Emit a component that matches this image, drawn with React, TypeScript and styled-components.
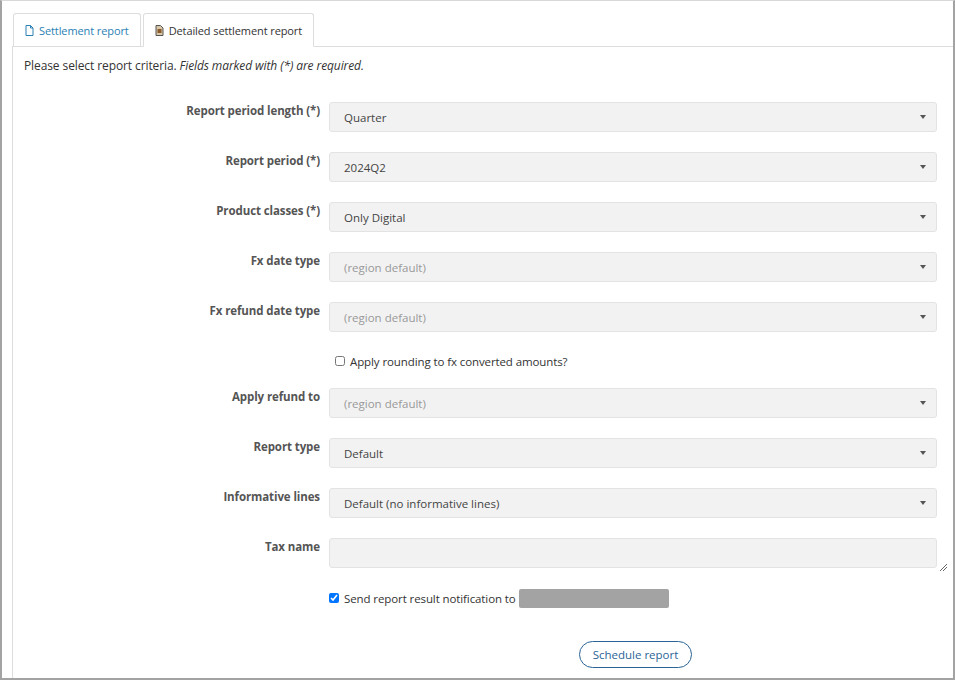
import React from "react";
import styled, { createGlobalStyle } from "styled-components";

const Global = createGlobalStyle`
  html, body { margin: 0; padding: 0; background: #fff; }
  body { font-family: "Open Sans", "Liberation Sans", sans-serif; font-size: 12px; color: #333; }
`;

const Frame = styled.div`
  box-sizing: border-box;
  width: 955px; height: 680px;
  border: 2px solid #a3a3a3;
  border-top: 1px solid #d8d8d8;
  padding: 12px 0 0 10px;
  background: #fff;
  overflow: hidden;
`;

const Tabs = styled.div`
  display: flex; height: 33px; align-items: stretch;
  border-bottom: 1px solid #ddd;
  padding-left: 1px;
`;

const Tab = styled.div<{ $active?: boolean }>`
  display: flex; align-items: center; gap: 5px;
  padding: 0 11px;
  margin-right: 2px;
  border: 1px solid #ddd;
  border-bottom: ${p => (p.$active ? "1px solid #fff" : "none")};
  margin-bottom: ${p => (p.$active ? "-1px" : "0")};
  border-radius: 3px 3px 0 0;
  background: #fff;
  color: ${p => (p.$active ? "#333" : "#2a7fb4")};
  font-size: 11px;
  letter-spacing: -0.1px;
`;

const Panel = styled.div`
  border-left: 1px solid #ddd;
  height: 640px;
  padding: 10px 16px 0 11px;
  box-sizing: border-box;
`;

const Intro = styled.p`
  margin: 0 0 28px; font-size: 12px; color: #333; letter-spacing: -0.1px;
  em { font-style: italic; }
`;

const Grid = styled.div`
  display: grid;
  grid-template-columns: 296px 1fr;
  column-gap: 9px;
  align-items: start;
`;

const Label = styled.div`
  text-align: right; font-weight: 700; color: #555; font-size: 11.5px;
  padding-top: 1px;
  line-height: 16px;
  letter-spacing: -0.1px;
`;

const Select = styled.div<{ $placeholder?: boolean }>`
  height: 30px; box-sizing: border-box;
  background: #f2f2f2; border: 1px solid #e3e3e3; border-radius: 3px;
  display: flex; align-items: center; justify-content: space-between;
  padding: 0 10px 0 14px;
  color: ${p => (p.$placeholder ? "#999" : "#444")};
  font-size: 11.5px;
  margin-bottom: 20px;
  &::after {
    content: ""; border-left: 3px solid transparent; border-right: 3px solid transparent;
    border-top: 4px solid #555;
  }
`;

const TextArea = styled.div`
  height: 30px; box-sizing: border-box; position: relative;
  background: #f2f2f2; border: 1px solid #e3e3e3; border-radius: 3px;
  margin-bottom: 21px;
`;

const Grip = styled.svg`
  position: absolute; right: -12px; bottom: -5px;
`;

const CheckRow = styled.label<{ $mb: number; $ml: number }>`
  grid-column: 2; margin-left: ${p => p.$ml}px;
  display: flex; align-items: center; gap: 3px; font-size: 11.5px; color: #333;
  height: 18px;
  margin-bottom: ${p => p.$mb}px;
  letter-spacing: -0.1px;
  input { margin: 0 2px 0 6px; width: 10px; height: 10px; }
`;

const Masked = styled.span`
  display: inline-block; width: 150px; height: 19px; background: #a3a3a3; border-radius: 2px;
`;

const Actions = styled.div`
  display: flex; justify-content: center; padding-left: 300px;
`;

const Button = styled.button`
  font-family: inherit; font-size: 11.5px; color: #2a6496;
  background: #fff; border: 1px solid #2a6496; border-radius: 14px;
  height: 27px; padding: 0 13px; margin-left: 10px;
`;

const DocIcon = ({ color }: { color: string }) => (
  <svg width="9" height="11" viewBox="0 0 9 11">
    <path d="M1 .5h4.5L8 3v7.5H1z M5.5 .5V3H8" fill="none" stroke={color} strokeWidth="1" />
  </svg>
);
const DocIcon2 = () => (
  <svg width="9" height="11" viewBox="0 0 9 11">
    <path d="M1 .5h4.5L8 3v7.5H1z" fill="#d8c7a8" stroke="#555" strokeWidth="1" />
    <rect x="2.5" y="4" width="4" height="4" fill="#8a5a2a" />
  </svg>
);

const rows: [string, string, boolean?][] = [
  ["Report period length (*)", "Quarter"],
  ["Report period (*)", "2024Q2"],
  ["Product classes (*)", "Only Digital"],
  ["Fx date type", "(region default)", true],
  ["Fx refund date type", "(region default)", true],
];
const rows2: [string, string, boolean?][] = [
  ["Apply refund to", "(region default)", true],
  ["Report type", "Default"],
  ["Informative lines", "Default (no informative lines)"],
];

export default function App() {
  return (
    <>
      <Global />
      <Frame>
        <Tabs>
          <Tab><DocIcon color="#2a7fb4" />Settlement report</Tab>
          <Tab $active><DocIcon2 />Detailed settlement report</Tab>
        </Tabs>
        <Panel>
          <Intro>Please select report criteria. <em>Fields marked with (*) are required.</em></Intro>
          <Grid>
            {rows.map(([l, v, p]) => (
              <React.Fragment key={l}>
                <Label>{l}</Label>
                <Select $placeholder={p}>{v}</Select>
              </React.Fragment>
            ))}
            <CheckRow $mb={18} $ml={0}><input type="checkbox" />Apply rounding to fx converted amounts?</CheckRow>
            {rows2.map(([l, v, p]) => (
              <React.Fragment key={l}>
                <Label>{l}</Label>
                <Select $placeholder={p}>{v}</Select>
              </React.Fragment>
            ))}
            <Label>Tax name</Label>
            <TextArea>
              <Grip width="9" height="9" viewBox="0 0 9 9">
                <path d="M1 8L8 1M4 8L8 4" stroke="#666" strokeWidth="1" />
              </Grip>
            </TextArea>
            <CheckRow $mb={34} $ml={-6}>
              <input type="checkbox" defaultChecked />Send report result notification to <Masked />
            </CheckRow>
          </Grid>
          <Actions><Button>Schedule report</Button></Actions>
        </Panel>
      </Frame>
    </>
  );
}
